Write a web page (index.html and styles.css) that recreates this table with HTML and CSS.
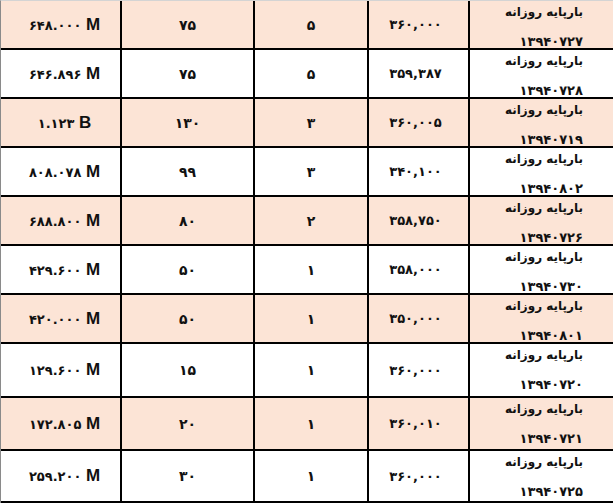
FILE: index.html
```html
<!DOCTYPE html>
<html lang="fa">
<head>
<meta charset="utf-8">
<title>بارپایه روزانه</title>
<link rel="stylesheet" href="styles.css">
</head>
<body>
<div class="sheet">
  <div class="row tint"><div class="cell c1"><span>۶۴۸.۰۰۰ <b>M</b></span></div><div class="cell c2">۷۵</div><div class="cell c3">۵</div><div class="cell c4">۳۶۰,۰۰۰</div><div class="cell c5"><div class="txt">بارپایه روزانه<br><span class="num">۱۳۹۴۰۷۲۷</span></div></div></div>
  <div class="row"><div class="cell c1"><span>۶۴۶.۸۹۶ <b>M</b></span></div><div class="cell c2">۷۵</div><div class="cell c3">۵</div><div class="cell c4">۳۵۹,۳۸۷</div><div class="cell c5"><div class="txt">بارپایه روزانه<br><span class="num">۱۳۹۴۰۷۲۸</span></div></div></div>
  <div class="row tint"><div class="cell c1"><span>۱.۱۲۳ <b>B</b></span></div><div class="cell c2">۱۳۰</div><div class="cell c3">۳</div><div class="cell c4">۳۶۰,۰۰۵</div><div class="cell c5"><div class="txt">بارپایه روزانه<br><span class="num">۱۳۹۴۰۷۱۹</span></div></div></div>
  <div class="row"><div class="cell c1"><span>۸۰۸.۰۷۸ <b>M</b></span></div><div class="cell c2">۹۹</div><div class="cell c3">۳</div><div class="cell c4">۳۴۰,۱۰۰</div><div class="cell c5"><div class="txt">بارپایه روزانه<br><span class="num">۱۳۹۴۰۸۰۲</span></div></div></div>
  <div class="row tint"><div class="cell c1"><span>۶۸۸.۸۰۰ <b>M</b></span></div><div class="cell c2">۸۰</div><div class="cell c3">۲</div><div class="cell c4">۳۵۸,۷۵۰</div><div class="cell c5"><div class="txt">بارپایه روزانه<br><span class="num">۱۳۹۴۰۷۲۶</span></div></div></div>
  <div class="row"><div class="cell c1"><span>۴۲۹.۶۰۰ <b>M</b></span></div><div class="cell c2">۵۰</div><div class="cell c3">۱</div><div class="cell c4">۳۵۸,۰۰۰</div><div class="cell c5"><div class="txt">بارپایه روزانه<br><span class="num">۱۳۹۴۰۷۳۰</span></div></div></div>
  <div class="row tint"><div class="cell c1"><span>۴۲۰.۰۰۰ <b>M</b></span></div><div class="cell c2">۵۰</div><div class="cell c3">۱</div><div class="cell c4">۳۵۰,۰۰۰</div><div class="cell c5"><div class="txt">بارپایه روزانه<br><span class="num">۱۳۹۴۰۸۰۱</span></div></div></div>
  <div class="row h54"><div class="cell c1"><span>۱۲۹.۶۰۰ <b>M</b></span></div><div class="cell c2">۱۵</div><div class="cell c3">۱</div><div class="cell c4">۳۶۰,۰۰۰</div><div class="cell c5"><div class="txt">بارپایه روزانه<br><span class="num">۱۳۹۴۰۷۲۰</span></div></div></div>
  <div class="row tint h53"><div class="cell c1"><span>۱۷۲.۸۰۵ <b>M</b></span></div><div class="cell c2">۲۰</div><div class="cell c3">۱</div><div class="cell c4">۳۶۰,۰۱۰</div><div class="cell c5"><div class="txt">بارپایه روزانه<br><span class="num">۱۳۹۴۰۷۲۱</span></div></div></div>
  <div class="row h52"><div class="cell c1"><span>۲۵۹.۲۰۰ <b>M</b></span></div><div class="cell c2">۳۰</div><div class="cell c3">۱</div><div class="cell c4">۳۶۰,۰۰۰</div><div class="cell c5"><div class="txt">بارپایه روزانه<br><span class="num">۱۳۹۴۰۷۲۵</span></div></div></div>
</div>
</body>
</html>
```

FILE: styles.css
```css
html, body {
  margin: 0;
  padding: 0;
  background: #fff;
}
body {
  width: 613px;
  height: 503px;
  overflow: hidden;
  font-family: "DejaVu Sans", sans-serif;
  color: #111;
}
.sheet {
  width: 613px;
  border-left: 1px solid #8a8a8a;
  border-top: 1px solid #d4d4d4;
  box-sizing: border-box;
}
.row {
  display: flex;
  height: 49px;
  background: #fff;
}
.row.tint { background: #fce4d6; }
.row.h54 { height: 54px; }
.row.h53 { height: 53px; }
.row.h52 { height: 52px; }
.cell {
  box-sizing: border-box;
  border-right: 2px solid #000;
  border-bottom: 2px solid #000;
  display: flex;
  align-items: center;
  justify-content: center;
  direction: ltr;
  white-space: nowrap;
}
.c1 {
  width: 121px;
  padding-left: 8px;
  font-size: 13px;
  font-weight: bold;
  letter-spacing: -0.5px;
}
.c1 b {
  font-family: "Liberation Sans", sans-serif;
  font-size: 17px;
  letter-spacing: 0;
}
.c2 {
  width: 133px;
  font-size: 14px;
  font-weight: bold;
}
.c3 {
  width: 114px;
  font-size: 14px;
  font-weight: bold;
}
.c4 {
  width: 101px;
  font-size: 13px;
  font-weight: bold;
  padding-right: 6px;
}
.c5 {
  flex: 1;
  border-right: none;
  direction: rtl;
  justify-content: flex-start;
  align-items: flex-start;
  padding-right: 30px;
  font-size: 12px;
  font-weight: bold;
}
.c5 .txt {
  line-height: 30px;
  margin-top: -4px;
  text-align: right;
}
.c5 .num {
  font-size: 13px;
  letter-spacing: -3.6px;
}
```
